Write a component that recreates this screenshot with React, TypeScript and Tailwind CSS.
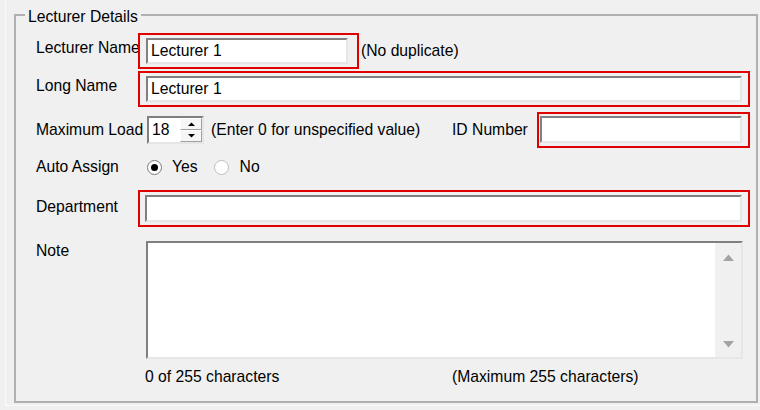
import React from "react";

// sunken Win32-style edit box
function Edit({ value, className }: { value?: string; className: string }) {
  return (
    <div
      className={`bg-white border-2 border-t-[#808080] border-l-[#808080] border-r-[#e6e6e6] border-b-[#e6e6e6] flex items-center pl-[3px] ${className}`}
    >
      {value}
    </div>
  );
}

function Radio({ checked }: { checked?: boolean }) {
  return (
    <span
      className={`w-[15px] h-[15px] rounded-full bg-white border flex items-center justify-center ${
        checked ? "border-[#7a7a7a]" : "border-[#bdbdbd]"
      }`}
    >
      {checked && <span className="w-[7px] h-[7px] rounded-full bg-black" />}
    </span>
  );
}

function Spinner({ value }: { value: string }) {
  return (
    <div className="w-[57px] h-[28px] bg-white border-2 border-t-[#808080] border-l-[#808080] border-r-[#e6e6e6] border-b-[#e6e6e6] flex">
      <div className="flex-1 flex items-center pl-[3px]">{value}</div>
      <div className="w-[22px] flex flex-col">
        <div className="flex-1 flex items-center justify-center bg-[#f6f6f6] border border-t-white border-l-white border-r-[#a0a0a0] border-b-[#a0a0a0]">
          <svg width="7" height="4" viewBox="0 0 7 4">
            <path d="M0 4 L3.5 0.5 L7 4 Z" fill="#000" />
          </svg>
        </div>
        <div className="flex-1 flex items-center justify-center bg-[#f6f6f6] border border-t-white border-l-white border-r-[#a0a0a0] border-b-[#a0a0a0]">
          <svg width="7" height="4" viewBox="0 0 7 4">
            <path d="M0 0 L3.5 3.5 L7 0 Z" fill="#000" />
          </svg>
        </div>
      </div>
    </div>
  );
}

const label = "w-[102px] shrink-0 whitespace-nowrap";

export default function App() {
  return (
    <div className="w-[760px] h-[410px] bg-[#f0f0f0] font-['Liberation_Sans',Arial,sans-serif] text-[15.7px] leading-[18px] text-black overflow-hidden">
      <div className="ml-[5px] h-[406px] border-l border-b border-[#fafafa] pl-[8px] pt-[4px]">
        <fieldset className="w-[744px] h-[399px] border-2 border-[#b0b0b0]">
          <legend className="ml-[9px] px-[3px] pt-[4px]">Lecturer Details</legend>

          <div className="pl-[20px] flex flex-col">
            {/* Lecturer Name */}
            <div className="flex items-start mt-[7px] h-[36px]">
              <span className={`${label} pt-[6px]`}>Lecturer Name</span>
              <div className="w-[221px] h-[36px] shrink-0 border-2 border-[#e00000] pl-[6px] pr-[9px] py-[3px]">
                <Edit value="Lecturer 1" className="h-[26px]" />
              </div>
              <span className="ml-[2px] pt-[9px] whitespace-nowrap">(No duplicate)</span>
            </div>

            {/* Long Name */}
            <div className="flex items-start mt-[2px] h-[36px]">
              <span className={`${label} pt-[6px]`}>Long Name</span>
              <div className="w-[612px] h-[36px] shrink-0 border-2 border-[#e00000] px-[6px] py-[3px]">
                <Edit value="Lecturer 1" className="h-[26px]" />
              </div>
            </div>

            {/* Maximum Load / ID Number */}
            <div className="flex items-center mt-[5px] h-[36px]">
              <span className={label}>Maximum Load</span>
              <div className="ml-[9px] shrink-0">
                <Spinner value="18" />
              </div>
              <span className="ml-[7px] w-[241px] shrink-0 whitespace-nowrap">(Enter 0 for unspecified value)</span>
              <span className="w-[85px] shrink-0 whitespace-nowrap">ID Number</span>
              <div className="w-[213px] h-[36px] shrink-0 border-2 border-[#e00000] pl-[1px] pr-[6px] pt-[2px] pb-[3px]">
                <Edit className="h-[27px]" />
              </div>
            </div>

            {/* Auto Assign */}
            <div className="flex items-center h-[38px]">
              <span className={label}>Auto Assign</span>
              <label className="ml-[9px] flex items-center">
                <Radio checked />
                <span className="ml-[10px]">Yes</span>
              </label>
              <label className="ml-[16px] flex items-center">
                <Radio />
                <span className="ml-[11px]">No</span>
              </label>
            </div>

            {/* Department */}
            <div className="flex items-start mt-[4px] h-[37px]">
              <span className={`${label} pt-[8px]`}>Department</span>
              <div className="w-[612px] h-[37px] shrink-0 border-2 border-[#e00000] pl-[5px] pr-[6px] pt-[3px] pb-[3px]">
                <Edit className="h-[27px]" />
              </div>
            </div>

            {/* Note */}
            <div className="flex items-start mt-[14px]">
              <span className={`${label} pt-[1px]`}>Note</span>
              <div className="ml-[8px] w-[597px] h-[118px] shrink-0 bg-white border-2 border-t-[#808080] border-l-[#808080] border-r-[#e6e6e6] border-b-[#e6e6e6] flex justify-end">
                <div className="w-[26px] h-full bg-[#f0f0f0] flex flex-col items-center justify-between pt-[11px] pb-[9px]">
                  <svg width="11" height="7" viewBox="0 0 11 7">
                    <path d="M0 7 L5.5 0.5 L11 7 Z" fill="#a3a3a3" />
                  </svg>
                  <svg width="11" height="7" viewBox="0 0 11 7">
                    <path d="M0 0 L5.5 6.5 L11 0 Z" fill="#a3a3a3" />
                  </svg>
                </div>
              </div>
            </div>

            {/* character counter */}
            <div className="flex items-center h-[36px]">
              <span className="ml-[109px] w-[307px] shrink-0">0 of 255 characters</span>
              <span className="whitespace-nowrap">(Maximum 255 characters)</span>
            </div>
          </div>
        </fieldset>
      </div>
    </div>
  );
}
